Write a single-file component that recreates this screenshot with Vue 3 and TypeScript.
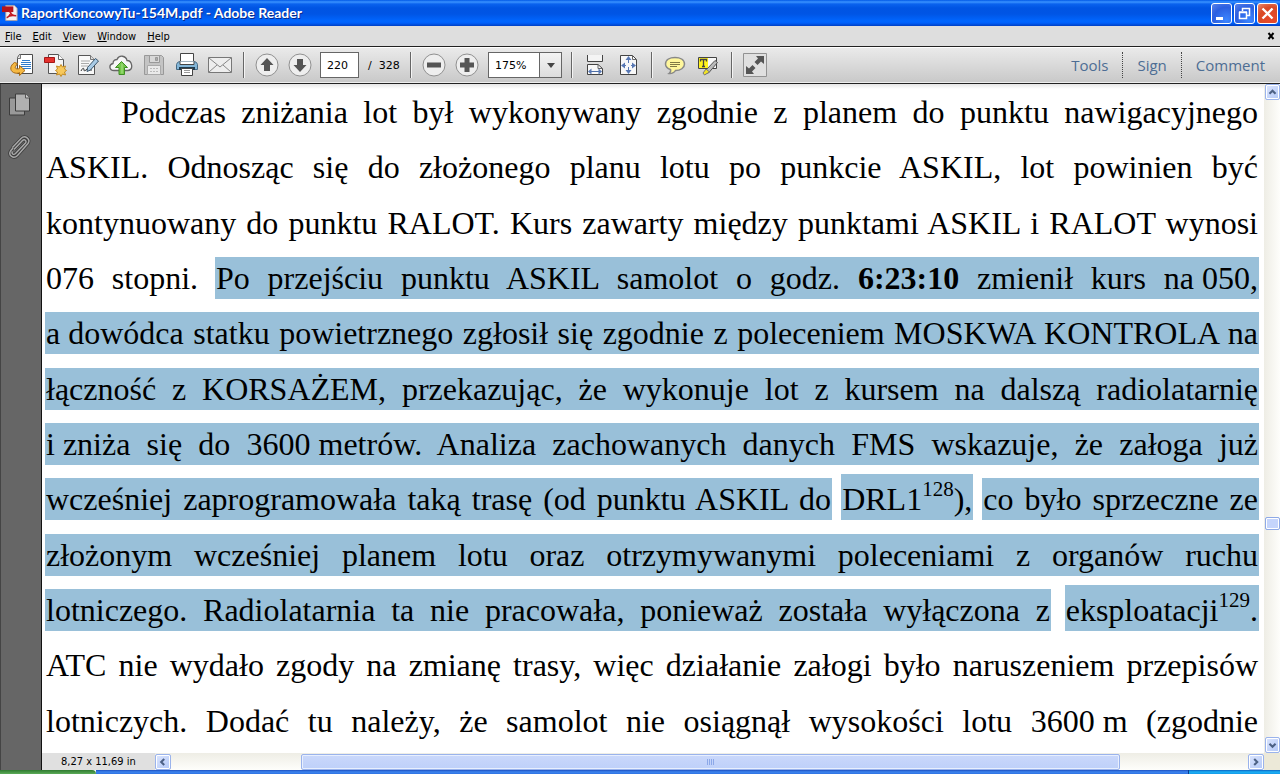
<script setup lang="ts">
import { ref } from 'vue'

interface Run {
  kind: 'plain' | 'marked' | 'tall'
  html: string
}

const menus = ['File', 'Edit', 'View', 'Window', 'Help']
const panels = ['Tools', 'Sign', 'Comment']
const page = ref('220')
const zoom = ref('175%')

const keep = (s: string) => `<span class="keep">${s}</span>`
const plain = (html: string): Run => ({ kind: 'plain', html })
const marked = (html: string): Run => ({ kind: 'marked', html })
const tall = (html: string): Run => ({ kind: 'tall', html })

const lines: Run[][] = [
  [plain('Podczas zniżania lot był wykonywany zgodnie z planem do punktu nawigacyjnego')],
  [plain('ASKIL. Odnosząc się do złożonego planu lotu po punkcie ASKIL, lot powinien być')],
  [plain('kontynuowany do punktu RALOT. Kurs zawarty między punktami ASKIL i RALOT wynosi')],
  [plain('076 stopni.'), marked(`Po przejściu punktu ASKIL samolot o godz. <b>6:23:10</b> zmienił kurs ${keep('na 050,')}`)],
  [marked(`${keep('a dowódca')} statku powietrznego zgłosił się zgodnie z poleceniem MOSKWA KONTROLA na`)],
  [marked('łączność z KORSAŻEM, przekazując, że wykonuje lot z kursem na dalszą radiolatarnię')],
  [marked(`${keep('i zniża')} się do ${keep('3600 metrów.')} Analiza zachowanych danych FMS wskazuje, że załoga już`)],
  [marked('wcześniej zaprogramowała taką trasę (od punktu ASKIL do'), tall('DRL1<sup>128</sup>),'), marked('co było sprzeczne ze')],
  [marked('złożonym wcześniej planem lotu oraz otrzymywanymi poleceniami z organów ruchu')],
  [marked('lotniczego. Radiolatarnia ta nie pracowała, ponieważ została wyłączona z'), tall('eksploatacji<sup>129</sup>.')],
  [plain('ATC nie wydało zgody na zmianę trasy, więc działanie załogi było naruszeniem przepisów')],
  [plain(`lotniczych. Dodać tu należy, że samolot nie osiągnął wysokości lotu ${keep('3600 m')} (zgodnie`)],
]
</script>

<template>
  <div class="window">
    <header class="titlebar">
      <svg class="app-icon" viewBox="0 0 18 18" aria-hidden="true">
        <path d="M4 1h9l3 3v13H4z" fill="#f4f0f0" stroke="#a8a0a8" />
        <path d="M0 2h12v6H0z" fill="#b5141c" />
        <path d="M9 5c1 4-1 8-4 9M8 7c1 3 3 5 7 5M5 14c2-2 5-3 10-2" fill="none" stroke="#c31820" stroke-width="1.6" />
      </svg>
      <h1>RaportKoncowyTu-154M.pdf - Adobe Reader</h1>
      <div class="caption">
        <button aria-label="Minimize"><svg viewBox="0 0 21 21"><path d="M5 14h7v3H5z" fill="#fff" /></svg></button>
        <button aria-label="Restore"><svg viewBox="0 0 21 21"><path d="M8.500 8V5.500h7v7H13M8 5.500h8M5.500 9.500h7v6h-7zM5 9h8" fill="none" stroke="#fff" stroke-width="1.500" /></svg></button>
        <button class="close" aria-label="Close"><svg viewBox="0 0 21 21"><path d="M5.500 5.500l10 10M15.500 5.500l-10 10" stroke="#fff" stroke-width="2.300" /></svg></button>
      </div>
    </header>

    <nav class="menubar">
      <button v-for="m in menus" :key="m"><u>{{ m[0] }}</u>{{ m.slice(1) }}</button>
      <button class="doc-close" aria-label="Close document"><svg viewBox="0 0 8 8"><path d="M1.500 1l5 6M6.500 1l-5 6" stroke="#000" stroke-width="2" /></svg></button>
    </nav>

    <div class="toolbar">
      <button class="tool" aria-label="Open">
        <svg viewBox="0 0 24 24"><path d="M9.500 1.500h13v19h-15v-16z" fill="#fff" stroke="#4c4c4c" /><path d="M7.500 5.500h3v-4" fill="#ddd" stroke="#777" /><path d="M12 7.500h8M11 9.500h10M11 11.500h10M11 13.500h10M13 15.500h8" stroke="#2f7ccc" /><path d="M4.500 9.500c-4.500 3-5 8-1 10 2 1 5 1 6 0v3l5.500-5-5.500-5v3c-3 1-5 0-4-2l2-3z" fill="#f5b944" stroke="#a96a12" /></svg>
      </button>
      <button class="tool" aria-label="Create PDF">
        <svg viewBox="0 0 24 24"><path d="M5.500 1.500h10l5 5v14h-15z" fill="#f5f5f5" stroke="#555" /><path d="M15.500 1.500v5h5" fill="#fff" stroke="#666" /><path d="M1.500 4.500h10v5h-10z" fill="#e4312d" stroke="#a51717" /><path d="M18 11.500l1.500 2.500 3-1-1 3 2 1.500-2 1.500 1 3-3-1-1.500 2.500-1.500-2.500-3 1 1-3-2-1.500 2-1.500-1-3 3 1z" fill="#f7c85b" stroke="#c38a20" /></svg>
      </button>
      <button class="tool" aria-label="Fill and sign">
        <svg viewBox="0 0 24 24"><path d="M2.500 2.500h12l4 4v15h-16z" fill="#f8f8f8" stroke="#555" /><path d="M14.500 2.500v4h4" fill="#ddd" stroke="#777" /><path d="M5 8h9M5 10.500h8M5 13h7" stroke="#aaa" /><path d="M5 18c2-4 3-3 3-1s2 0 3-1l2 1h3" fill="none" stroke="#333" /><path d="M19.500 5.500l3 2.500-8 9-3.500 1.500.5-4z" fill="#a9cbe6" stroke="#3b5468" /></svg>
      </button>
      <button class="tool" aria-label="Upload">
        <svg viewBox="0 0 24 24"><path d="M5 17.500c-5 0-5.500-6-1-7 0-4 3-4 4-4 2-5 9-4 10 1 5 0 7 9 1 10z" fill="#f7f7f7" stroke="#666" stroke-width="1.300" /><path d="M12.500 8.500l6 6h-3v7h-5.500v-7h-3.500z" fill="#75c84b" stroke="#3f8d24" /><path d="M13 10.500v10" stroke="#aee38e" /></svg>
      </button>
      <button class="tool" aria-label="Save">
        <svg viewBox="0 0 24 24"><path d="M2.500 2.500h17l2 2v17h-19z" fill="#c4c4c4" stroke="#999" /><path d="M7.500 2.500h10v7h-10z" fill="#d8d8d8" stroke="#999" /><path d="M13.500 4.500h2v3h-2z" fill="#aaa" stroke="#999" /><path d="M5.500 12.500h13v9h-13z" fill="#eaeaea" stroke="#aaa" /><path d="M8 15.500h8M8 18.500h8" stroke="#bbb" stroke-dasharray="2 1" /></svg>
      </button>
      <button class="tool" aria-label="Print">
        <svg viewBox="0 0 24 24"><path d="M5.500.500h13v11h-13z" fill="#fff" stroke="#444" /><path d="M2.500 9.500l2-1h15l2 1 1 2v5h-21v-5z" fill="#83b6d8" stroke="#466a84" /><path d="M5 8.500v3h14v-3" fill="#fff" stroke="#444" /><path d="M4 15.500h16" stroke="#203c50" stroke-width="3" /><path d="M6.500 15.500h11v7h-11z" fill="#fff" stroke="#444" /><path d="M9 17.500h6M9 19.500h6" stroke="#999" /></svg>
      </button>
      <button class="tool" aria-label="Send by e-mail">
        <svg viewBox="0 0 24 24"><path d="M.500 4.500h23v15H.500z" fill="#eee" stroke="#777" /><path d="M1 5l11 9L23 5M1 19l8-7M23 19l-8-7" fill="none" stroke="#888" /></svg>
      </button>
      <i class="sep" />
      <button class="tool" aria-label="Previous page">
        <svg viewBox="0 0 24 24"><circle cx="12" cy="12" r="11" fill="#eee" stroke="#909090" /><path d="M12 5l6.500 7H15v6H9v-6H5.500z" fill="#555" /></svg>
      </button>
      <button class="tool" aria-label="Next page">
        <svg viewBox="0 0 24 24"><circle cx="12" cy="12" r="11" fill="#eee" stroke="#909090" /><path d="M12 19l6.500-7H15V6H9v6H5.500z" fill="#555" /></svg>
      </button>
      <input v-model="page" class="page-no" aria-label="Page number">
      <span class="page-total">/&nbsp; 328</span>
      <i class="sep" />
      <button class="tool" aria-label="Zoom out">
        <svg viewBox="0 0 24 24"><circle cx="12" cy="12" r="11" fill="#eee" stroke="#909090" /><path d="M5 9.500h14v5H5z" fill="#555" /></svg>
      </button>
      <button class="tool" aria-label="Zoom in">
        <svg viewBox="0 0 24 24"><circle cx="12" cy="12" r="11" fill="#eee" stroke="#909090" /><path d="M9.500 5h5v4.500H19v5h-4.500V19h-5v-4.500H5v-5h4.500z" fill="#555" /></svg>
      </button>
      <div class="zoom">
        <select v-model="zoom" aria-label="Zoom level">
          <option>100%</option>
          <option>175%</option>
          <option>200%</option>
        </select>
        <span class="drop"><svg viewBox="0 0 8 5"><path d="M0 0h8L4 5z" fill="#444" /></svg></span>
      </div>
      <i class="sep" />
      <button class="tool" aria-label="Fit width">
        <svg viewBox="0 0 24 24"><path d="M4.500 2v6.500h15V2" fill="#f4f4f4" stroke="#444" /><path d="M4.500 21.500v-10h10.500l4.500 4v6z" fill="#f8f8f8" stroke="#444" /><path d="M15 11.500v4h4.500" fill="none" stroke="#666" /><path d="M6 18.500h12" stroke="#4e6fa8" /><path d="M8.500 15.500v6l-3.500-3zM15.500 15.500v6l3.500-3z" fill="#5878b4" /></svg>
      </button>
      <button class="tool" aria-label="Fit page">
        <svg viewBox="0 0 24 24"><path d="M4.500 2.500h12l4 4v15h-16z" fill="#f8f8f8" stroke="#444" /><path d="M16.500 2.500v4h4" fill="none" stroke="#666" /><path d="M12.500 5v5M12.500 14v5M6 12.500h4M15 12.500h4" stroke="#5878b4" /><path d="M12.500 3l3 4h-6zM12.500 21l3-4h-6zM5 12.500l4-3v6zM20 12.500l-4-3v6z" fill="#5878b4" /></svg>
      </button>
      <i class="sep" />
      <button class="tool" aria-label="Add note">
        <svg viewBox="0 0 24 24"><path d="M12 4.500c5 0 9.500 2 9.500 6.500 0 4-4 6.500-9 6.500-1 2-4 3.500-6.500 3 1.500-1 2-2 1.500-4C4.500 15.500 2.500 14 2.500 11 2.500 6.500 7 4.500 12 4.500z" fill="#fff79c" stroke="#888" stroke-width="1.500" /><path d="M7 9.500h10M7 11.500h10M7 13.500h7" stroke="#807a45" /></svg>
      </button>
      <button class="tool" aria-label="Highlight text">
        <svg viewBox="0 0 24 24"><path d="M2.500 4.500h18v11h-18z" fill="#f8f8f8" stroke="#444" /><path d="M3 5h9v10H3z" fill="#fff21c" /><path d="M4.500 8.500v-2h6v2M7.500 6.500v7M6 13.500h3" fill="none" stroke="#444" stroke-width="1.300" /><path d="M19 7.500l2.500 2-8.500 10-4.500 1.500 2-4.500z" fill="#bbb" stroke="#555" /><path d="M10 16l3.500 3-5 3-1.500-2z" fill="#f1e324" stroke="#777" /></svg>
      </button>
      <i class="sep" />
      <button class="tool" aria-label="Read mode">
        <svg viewBox="0 0 24 24"><path d="M.500.500h23v23H.500z" fill="#e0e0e0" stroke="#929292" /><path d="M13 3h8v8l-3-2.500-3.500 3.500-3-3L15 5.500zM11 21H3v-8l3 2.500L9.500 12l3 3L9 18.500z" fill="#555" /></svg>
      </button>
      <div class="panels">
        <button v-for="p in panels" :key="p">{{ p }}</button>
      </div>
    </div>

    <div class="body">
      <aside class="rail">
        <button aria-label="Page thumbnails">
          <svg viewBox="0 0 24 24"><path d="M2.500 5.500h15v17h-15z" fill="#999" stroke="#3c3c3c" /><path d="M8.500 1.500h10l4 4v13h-14z" fill="#b0b0b0" stroke="#3c3c3c" /><path d="M18.500 1.500v4h4" fill="#ccc" stroke="#555" /></svg>
        </button>
        <button aria-label="Attachments">
          <svg viewBox="0 0 24 24"><path d="M7 14l8.500-9c2-2 4.500.500 3 2.500L8.500 18c-2 2-4.500 0-3-2M5.500 12L14 3c4-4 10 .500 7 5L10.500 20c-4 4-9.500 0-7-4.500L6 12.500" fill="none" stroke="#3e3e3e" stroke-width="3.200" /><path d="M7 14l8.500-9c2-2 4.500.500 3 2.500L8.500 18c-2 2-4.500 0-3-2M5.500 12L14 3c4-4 10 .500 7 5L10.500 20c-4 4-9.500 0-7-4.500L6 12.500" fill="none" stroke="#aaa" stroke-width="1.400" /></svg>
        </button>
      </aside>

      <main class="page">
        <p v-for="(line, i) in lines" :key="i" :class="{ indent: i === 0 }">
          <template v-for="(run, j) in line" :key="j"><span :class="run.kind" v-html="run.html" />{{ ' ' }}</template>
        </p>
      </main>

      <div class="vscroll">
        <button class="sb" aria-label="Scroll up"><svg viewBox="0 0 15 15"><path d="M4 9.500l3.500-3.500L11 9.500" /></svg></button>
        <i class="space-above" />
        <i class="vthumb" />
        <i class="space-below" />
        <button class="sb" aria-label="Scroll down"><svg viewBox="0 0 15 15"><path d="M4 6l3.500 3.500L11 6" /></svg></button>
      </div>

      <div class="status">
        <span class="size">8,27 x 11,69 in</span>
        <button class="sb" aria-label="Scroll left"><svg viewBox="0 0 15 15"><path d="M9.500 4L6 7.500 9.500 11" /></svg></button>
        <div class="htrack"><i class="hthumb"><b /><b /><b /><b /></i></div>
        <button class="sb" aria-label="Scroll right"><svg viewBox="0 0 15 15"><path d="M6 4l3.500 3.500L6 11" /></svg></button>
      </div>
      <div class="corner" />
    </div>

    <footer class="taskbar"><i class="start" /><i class="tasks" /><i class="tray" /></footer>
  </div>
</template>

<style>
body {
  margin: 0;
  overflow: hidden;
}
</style>

<style scoped>
.window {
  display: grid;
  grid-template-rows: 26px 20px 38px minmax(0, 1fr) 4px;
  height: 100vh;
  background: #fff;
  font-family: "DejaVu Sans Condensed", "Noto Sans", sans-serif;
  font-size: 11px;
  color: #000;
}

button {
  padding: 0;
  border: 0;
  background: none;
  font: inherit;
  color: inherit;
}

svg {
  display: block;
}

.titlebar {
  display: flex;
  align-items: center;
  padding: 0 2px;
  background: linear-gradient(#0058e6 0, #3a93ff 2px, #0a62ee 4px, #0054e3 8px, #0055e5 14px, #0066ff 21px, #0060fa 23px, #003fc4 26px);
}

.app-icon {
  width: 17px;
  height: 18px;
}

h1 {
  flex: 1;
  margin: 0 0 0 2px;
  font: bold 14px/24px Lato, "Open Sans", sans-serif;
  color: #fff;
  text-shadow: 1px 1px #0a2a8a;
  white-space: nowrap;
}

.caption {
  display: flex;
  gap: 2px;
}

.caption button {
  box-sizing: border-box;
  width: 21px;
  height: 21px;
  border: 1px solid #fff;
  border-radius: 3px;
  background: radial-gradient(circle at 75% 85%, #3c86ff, #2b5fe0 60%, #5b83ea);
}

.caption svg {
  width: 21px;
  height: 21px;
  margin: -1px;
}

.caption .close {
  background: radial-gradient(circle at 70% 80%, #e8482a, #d94a26 60%, #e98c72);
}

.menubar {
  display: flex;
  align-items: center;
  gap: 11px;
  padding: 0 5px;
  background: #dedede;
}

.menubar .doc-close {
  margin-left: auto;
}

.doc-close svg {
  width: 8px;
  height: 8px;
}

.toolbar {
  box-sizing: border-box;
  display: flex;
  align-items: center;
  padding: 0 1px 0 5px;
  border-top: 1px solid #222;
  border-bottom: 1px solid #222;
  box-shadow: inset 0 1px #fff, inset 0 -1px #eee;
  background: linear-gradient(#ebebeb, #c8c8c8);
  font: 11px "DejaVu Sans", sans-serif;
}

.tool {
  flex: none;
  display: flex;
  justify-content: center;
  width: 33px;
}

.tool svg {
  width: 24px;
  height: 24px;
}

.sep {
  flex: none;
  width: 1px;
  height: 26px;
  margin: 0 5px 0 7px;
  background: #666;
  border-right: 1px solid #f4f4f4;
}

.page-no {
  box-sizing: border-box;
  width: 39px;
  height: 26px;
  margin-left: 4px;
  padding: 0 6px;
  border: 1px solid #666;
  background: #fff;
  font: inherit;
}

.page-total {
  box-sizing: border-box;
  width: 44px;
  padding-left: 9px;
  white-space: nowrap;
}

.zoom {
  display: grid;
  grid-template-columns: 50px 22px;
  height: 24px;
  margin: 0 2px 0 5px;
  border: 1px solid #666;
  background: #fff;
}

.zoom select {
  grid-area: 1 / 1 / 2 / 3;
  appearance: none;
  padding: 0 6px;
  border: 0;
  background: none;
  font: inherit;
  color: inherit;
}

.drop {
  grid-area: 1 / 2;
  display: grid;
  place-items: center;
  border-left: 1px solid #666;
  background: linear-gradient(#f4f4f4, #ddd);
  pointer-events: none;
}

.drop svg {
  width: 8px;
  height: 5px;
}

.panels {
  display: flex;
  margin-left: auto;
  font: 500 15px "Open Sans", "Noto Sans", sans-serif;
  color: #4d6d94;
  text-shadow: 0 1px #fff;
}

.panels button {
  height: 26px;
  padding: 0 14px;
}

.panels button + button {
  border-left: 1px dotted #444;
}

.body {
  display: grid;
  grid-template-columns: 42px minmax(0, 1fr) 16px;
  grid-template-rows: minmax(0, 1fr) 17px;
  min-height: 0;
}

.rail {
  grid-row: 1 / 3;
  display: flex;
  flex-direction: column;
  align-items: center;
  gap: 18px;
  padding-top: 8px;
  padding-right: 4px;
  background: #666;
  border-right: 1px solid #111;
  border-left: 1px solid #444;
}

.rail svg {
  width: 24px;
  height: 25px;
}

.page {
  display: grid;
  grid-template-rows: repeat(12, 1fr);
  min-height: 0;
  padding: 1px 6px 4px 4px;
  overflow: hidden;
  background: linear-gradient(#e6e6e6, #fff 5px);
  font: 32px/55px "Liberation Serif", "Times New Roman", serif;
}

.page p {
  margin: 0;
  text-align: justify;
  text-align-last: justify;
  white-space: nowrap;
}

.page .indent {
  padding-left: 75px;
}

.marked,
.tall {
  margin: 0 -1px;
  padding: 3px 1px;
  background: #99c0d9;
}

.tall {
  padding-top: 7px;
}

.page :deep(.keep) {
  display: inline-block;
}

.page :deep(sup) {
  font-size: 21px;
  line-height: 0;
  vertical-align: 14px;
}

.vscroll {
  display: flex;
  flex-direction: column;
  align-items: center;
  background: linear-gradient(90deg, #eeede5, #fefefb);
}

.sb {
  flex: none;
  box-sizing: border-box;
  width: 15px;
  height: 16px;
  border: 1px solid #9ab3ec;
  border-radius: 2px;
  box-shadow: inset 0 0 0 1px #fff;
  background: linear-gradient(135deg, #dbe5fe, #b3c8f7);
}

.sb svg {
  width: 13px;
  height: 14px;
}

.sb path {
  fill: none;
  stroke: #4d6185;
  stroke-width: 2.4;
}

.space-above {
  flex: 417;
}

.space-below {
  flex: 207;
}

.vthumb {
  box-sizing: border-box;
  width: 15px;
  height: 13px;
  border: 1px solid #8ea9e6;
  border-radius: 2px;
  box-shadow: inset 0 0 0 1px #fff;
  background: #c5d5fc;
}

.status {
  display: flex;
  align-items: center;
  background: linear-gradient(#eeede5, #fefefb);
}

.status .sb {
  width: 16px;
}

.size {
  box-sizing: border-box;
  width: 113px;
  height: 17px;
  padding-left: 19px;
  line-height: 17px;
  background: #e0e0e0;
  white-space: nowrap;
}

.htrack {
  display: grid;
  grid-template-columns: 130fr 819fr 128fr;
  flex: 1;
}

.hthumb {
  box-sizing: border-box;
  grid-column: 2;
  display: flex;
  justify-content: center;
  align-items: center;
  gap: 1px;
  height: 16px;
  border: 1px solid #9ab3ec;
  border-radius: 2px;
  box-shadow: inset 0 0 0 1px #e8effe;
  background: linear-gradient(#cad8fb, #bed0f9);
}

.hthumb b {
  width: 1px;
  height: 6px;
  background: #8ca8e8;
}

.corner {
  background: #ece9d8;
}

.taskbar {
  display: grid;
  grid-template-columns: 96px 1fr 92px;
}

.start {
  background: linear-gradient(#2f7a30, #5bab58);
  border-radius: 0 4px 0 0;
}

.tasks {
  background: linear-gradient(#1d4fc0, #3c84ee 2px, #2f72e2);
}

.tray {
  border-left: 1px solid #0a3a90;
  background: linear-gradient(#0c62c0, #1cb0f4 2px, #159ae8);
}
</style>
